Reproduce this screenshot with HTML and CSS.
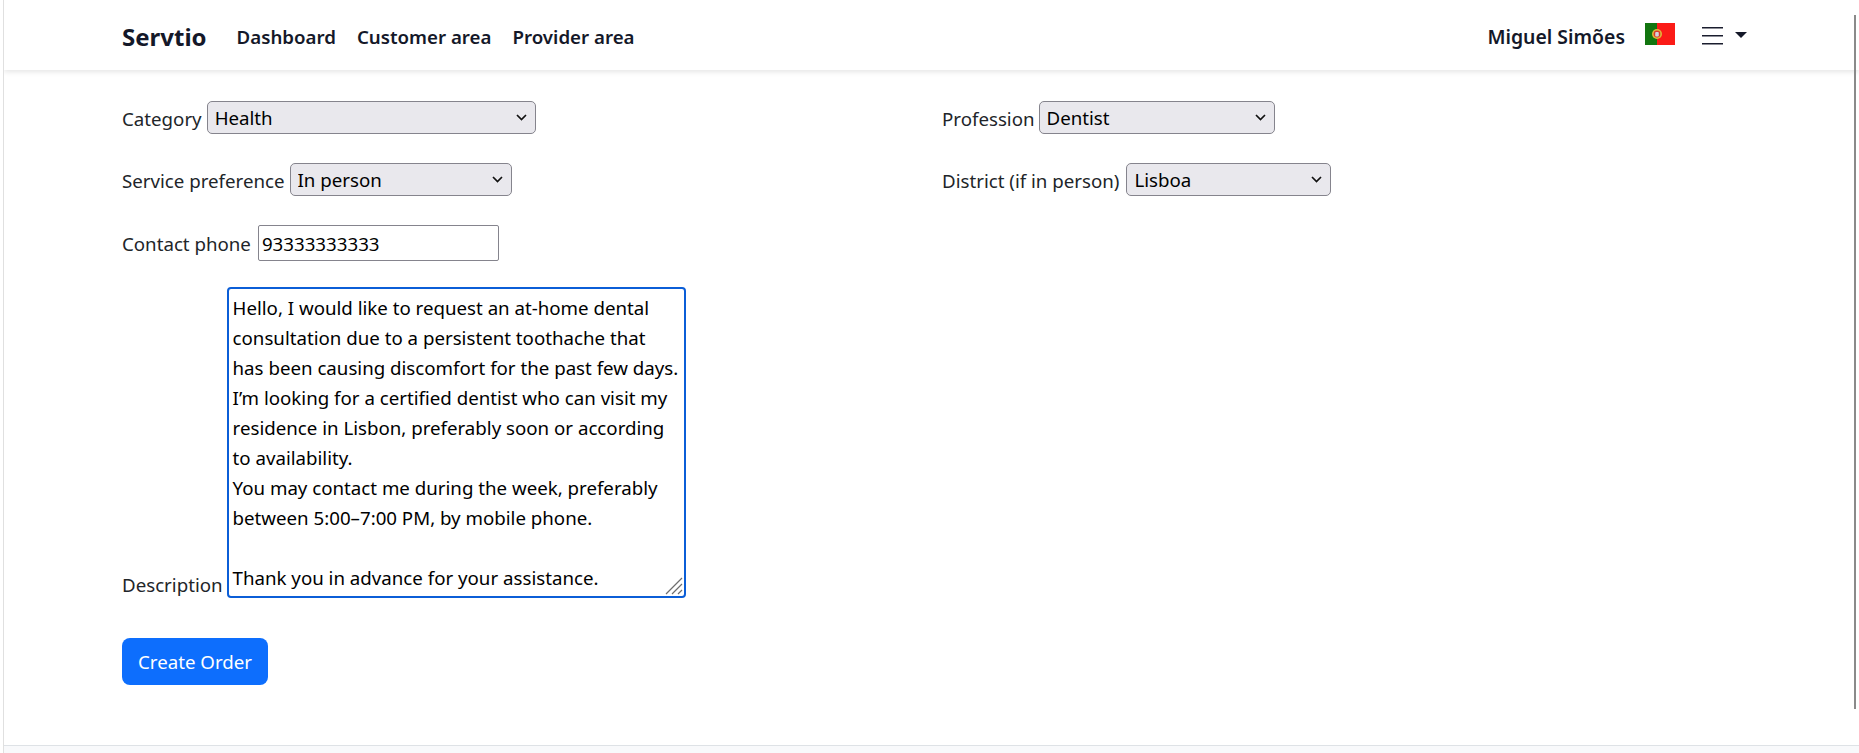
FILE: index.html
```html
<!DOCTYPE html>
<html lang="en">
<head>
  <meta charset="UTF-8" />
  <meta name="viewport" content="width=device-width, initial-scale=1.0" />
  <title>Servtio - Create Order</title>
  <link rel="stylesheet" href="styles.css">
</head>
<body>
  <div class="page">
    <nav class="navbar">
      <a class="brand" href="#">Servtio</a>
      <a class="nav-link" href="#">Dashboard</a>
      <a class="nav-link" href="#">Customer area</a>
      <a class="nav-link" href="#">Provider area</a>
      <div class="nav-right">
        <span class="nav-link user-name">Miguel Simões</span>
        <svg class="flag" viewBox="0 0 30 22" aria-label="Portuguese flag">
          <rect width="12" height="22" fill="#12750f" />
          <rect x="12" width="18" height="22" fill="#fb1b17" />
          <circle cx="12" cy="11" r="5" fill="#e0b93a" />
          <circle cx="12" cy="11" r="3.4" fill="#d8392c" />
          <rect x="10.2" y="9" width="3.6" height="4.4" rx="1" fill="#d4d4dc" />
        </svg>
        <button class="menu-toggle" type="button" aria-label="Menu">
          <svg class="burger" viewBox="0 0 21 20">
            <path d="M0 2.7h21M0 10.7h21M0 18.7h21" stroke="#1a1d2e" stroke-width="1.4" fill="none" />
          </svg>
          <span class="caret"></span>
        </button>
      </div>
    </nav>

    <main class="content">
      <form id="orderForm">
        <div class="form-grid">
          <div class="field">
            <label for="category">Category</label>
            <select id="category" class="select-category"><option>Health</option></select>
          </div>
          <div class="field">
            <label for="profession">Profession</label>
            <select id="profession" class="select-profession"><option>Dentist</option></select>
          </div>
          <div class="field">
            <label for="preference">Service preference</label>
            <select id="preference" class="select-preference"><option>In person</option></select>
          </div>
          <div class="field">
            <label for="district">District (if in person)</label>
            <select id="district" class="select-district"><option>Lisboa</option></select>
          </div>
          <div class="field">
            <label for="phone">Contact phone</label>
            <input type="text" id="phone" value="93333333333" />
          </div>
        </div>
        <div class="field field-description">
          <label for="description">Description</label>
          <div class="textarea-wrap">
            <textarea id="description" rows="10">Hello, I would like to request an at-home dental consultation due to a persistent toothache that has been causing discomfort for the past few days. I’m looking for a certified dentist who can visit my residence in Lisbon, preferably soon or according to availability.
You may contact me during the week, preferably between 5:00–7:00 PM, by mobile phone.

Thank you in advance for your assistance.</textarea>
            <svg class="resizer" viewBox="0 0 18 18">
              <path d="M1 17L17 1M7 17L17 7M13 17L17 13" stroke="#6e6e6e" stroke-width="1.2" fill="none" />
            </svg>
          </div>
        </div>
        <button class="btn-primary" type="submit">Create Order</button>
      </form>
    </main>

    <footer class="footer"></footer>
  </div>
  <div class="scrollbar-thumb"></div>
</body>
</html>
```

FILE: styles.css
```css
/* Basic styling */
body {
  margin: 0 0 0 3px;
  font-family: "Noto Sans", Arial, sans-serif;
  font-size: 18.7px;
  line-height: 30px;
  color: #212529;
  background-color: white;
  border-left: 1px solid #e0e0e0;
}

.page {
  display: flex;
  flex-direction: column;
  height: 100vh;
}

.navbar {
  display: flex;
  align-items: center;
  height: 70px;
  box-sizing: border-box;
  padding: 3px 112px 0 118px;
  box-shadow: 0 2px 5px rgba(0, 0, 0, 0.1);
  flex-shrink: 0;
}

.navbar a {
  text-decoration: none;
}

.brand {
  font-size: 24px;
  font-weight: 700;
  color: #141829;
  margin-right: 30px;
}

.nav-link {
  font-size: 18.7px;
  font-weight: 600;
  color: #141829;
  margin-right: 21px;
}

.nav-right {
  display: flex;
  align-items: center;
  margin-left: auto;
}

.user-name {
  font-size: 19.4px;
  margin-right: 20px;
}

.flag {
  width: 30px;
  height: 22px;
  margin-right: 27px;
  margin-top: -5px;
}

.menu-toggle {
  display: flex;
  align-items: center;
  padding: 0;
  margin-top: -3px;
  border: none;
  background: none;
}

.burger {
  width: 21px;
  height: 20px;
  margin-right: 12px;
}

.caret {
  width: 0;
  height: 0;
  border-top: 6px solid #141829;
  border-left: 6px solid transparent;
  border-right: 6px solid transparent;
}

.content {
  flex: 1;
  padding: 31px 0 0 118px;
}

.form-grid {
  display: grid;
  grid-template-columns: 820px 1fr;
  row-gap: 29px;
}

.field {
  display: flex;
  align-items: center;
  gap: 5px;
}

.field label {
  padding-top: 2px;
}

select,
input,
textarea {
  font-family: inherit;
  font-size: inherit;
  line-height: inherit;
  color: black;
  box-sizing: border-box;
}

select {
  appearance: none;
  height: 33px;
  padding: 0 3px 0 7px;
  background-color: #e9e8ed;
  background-image: url("data:image/svg+xml,%3Csvg xmlns='http://www.w3.org/2000/svg' width='11' height='7'%3E%3Cpath d='M1 1l4.5 4.5L10 1' stroke='%23111' stroke-width='1.7' fill='none'/%3E%3C/svg%3E");
  background-repeat: no-repeat;
  background-position: right 8px center;
  border: 1px solid #85848d;
  border-radius: 5px;
}

.select-category { width: 329px; }
.select-profession { width: 236px; margin-left: -1px; }
.select-preference { width: 222px; }
.select-district { width: 205px; margin-left: 2px; }

input[type="text"] {
  width: 241px;
  height: 36px;
  margin-left: 2px;
  padding: 0 3px;
  border: 1px solid #85848d;
  border-radius: 2px;
}

.field-description {
  align-items: flex-end;
  gap: 4px;
  margin-top: 26px;
}

.field-description label {
  padding-top: 0;
  margin-bottom: -2px;
}

.textarea-wrap {
  position: relative;
  display: flex;
}

textarea {
  width: 459px;
  height: 311px;
  padding: 4px 3px 4px 4px;
  border: 2px solid #0b5ed7;
  border-radius: 4px;
  outline: none;
  overflow: hidden;
  resize: none;
}

.resizer {
  position: absolute;
  right: 3px;
  bottom: 3px;
  width: 18px;
  height: 18px;
}

.btn-primary {
  display: block;
  margin-top: 40px;
  width: 146px;
  height: 47px;
  font-family: inherit;
  font-size: inherit;
  color: white;
  background-color: #0d6efd;
  border: none;
  border-radius: 8px;
}

.footer {
  height: 7px;
  background-color: #f8f9fb;
  border-top: 1px solid #dee2e6;
  flex-shrink: 0;
}

.scrollbar-thumb {
  position: absolute;
  top: 15px;
  right: 3px;
  width: 2px;
  height: 694px;
  background-color: #8a8a8a;
}
```
